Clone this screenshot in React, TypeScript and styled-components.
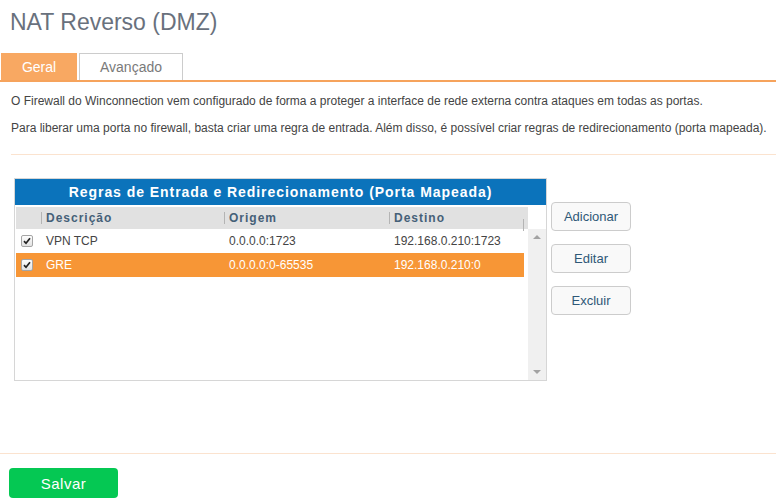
import styled, { createGlobalStyle } from 'styled-components';

const GlobalStyle = createGlobalStyle`
  body {
    margin: 0;
    background: #fff;
    font-family: "Liberation Sans", Arial, sans-serif;
  }
`;

type Rule = {
  desc: string;
  origem: string;
  destino: string;
  checked: boolean;
  selected?: boolean;
};

const rules: Rule[] = [
  { desc: 'VPN TCP', origem: '0.0.0.0:1723', destino: '192.168.0.210:1723', checked: true },
  { desc: 'GRE', origem: '0.0.0.0:0-65535', destino: '192.168.0.210:0', checked: true, selected: true },
];

function Check() {
  return (
    <CheckBox>
      <svg width='8' height='8' viewBox='0 0 8 8'>
        <path d='M1 4.2 L3 6.3 L7 1.2' fill='none' stroke='#222' strokeWidth='1.7' />
      </svg>
    </CheckBox>
  );
}

function App() {
  return (
    <Page>
      <GlobalStyle />
      <Title>NAT Reverso (DMZ)</Title>

      <TabBar>
        <Tab $active $width={76}>Geral</Tab>
        <Tab $width={104}>Avançado</Tab>
      </TabBar>

      <Content>
        <Text>
          O Firewall do Winconnection vem configurado de forma a proteger a interface de rede externa contra
          ataques em todas as portas.
        </Text>
        <Text>
          Para liberar uma porta no firewall, basta criar uma regra de entrada. Além disso, é possível criar regras
          de redirecionamento (porta mapeada).
        </Text>
        <Divider />

        <RulesArea>
          <Grid>
            <Caption>Regras de Entrada e Redirecionamento (Porta Mapeada)</Caption>
            <GridBody>
              <List>
                <HeadRow>
                  <span />
                  <HeadCell>Descrição</HeadCell>
                  <HeadCell>Origem</HeadCell>
                  <HeadCell>Destino</HeadCell>
                  <HeadCell />
                </HeadRow>
                {rules.map((r) => (
                  <Row key={r.desc} $selected={r.selected}>
                    <CheckCell>{r.checked && <Check />}</CheckCell>
                    <Cell>{r.desc}</Cell>
                    <Cell>{r.origem}</Cell>
                    <Cell>{r.destino}</Cell>
                  </Row>
                ))}
              </List>
              <ScrollBar>
                <ScrollTop />
                <Track>
                  <Arrow $up />
                  <Arrow />
                </Track>
              </ScrollBar>
            </GridBody>
          </Grid>

          <Actions>
            <ActionButton>Adicionar</ActionButton>
            <ActionButton>Editar</ActionButton>
            <ActionButton>Excluir</ActionButton>
          </Actions>
        </RulesArea>
      </Content>

      <Footer>
        <SaveButton>Salvar</SaveButton>
      </Footer>
    </Page>
  );
}

const Page = styled.div`
  width: 776px;
  height: 502px;
  overflow: hidden;
`;

const Title = styled.h1`
  margin: 0;
  box-sizing: border-box;
  height: 53px;
  padding: 11px 0 0 10px;
  font-size: 23px;
  line-height: 23px;
  font-weight: normal;
  color: #69717d;
`;

const TabBar = styled.div`
  display: flex;
  gap: 2px;
  padding-left: 1px;
  height: 29px;
  box-sizing: border-box;
  border-bottom: 2px solid #f6a35c;
`;

const Tab = styled.div<{ $active?: boolean; $width: number }>`
  width: ${(p) => p.$width}px;
  height: 27px;
  box-sizing: border-box;
  display: flex;
  align-items: center;
  justify-content: center;
  font-size: 14px;
  background: ${(p) => (p.$active ? '#f8a862' : '#fff')};
  color: ${(p) => (p.$active ? '#fff' : '#7a7a7a')};
  border: 1px solid ${(p) => (p.$active ? '#f8a862' : '#cccccc')};
  border-bottom: none;
  cursor: pointer;
`;

const Content = styled.div`
  padding: 6px 0 0 11px;
`;

const Text = styled.p`
  margin: 0;
  font-size: 12px;
  line-height: 27px;
  color: #444;
`;

const Divider = styled.div`
  margin-top: 12px;
  height: 1px;
  background: #fbe3cf;
`;

const RulesArea = styled.div`
  display: flex;
  align-items: flex-start;
  gap: 4px;
  margin: 23px 0 0 3px;
`;

const Grid = styled.div`
  width: 533px;
  height: 203px;
  box-sizing: border-box;
  border: 1px solid #d6d6d6;
  display: flex;
  flex-direction: column;
`;

const Caption = styled.div`
  height: 26px;
  background: #0b73bb;
  color: #fff;
  font-size: 14px;
  font-weight: bold;
  letter-spacing: 0.95px;
  display: flex;
  align-items: center;
  justify-content: center;
`;

const GridBody = styled.div`
  flex: 1;
  display: flex;
  padding-top: 2px;
`;

const List = styled.div`
  width: 513px;
  padding-left: 1px;
`;

const columns = '25px 183px 165px 134px 1fr';

const HeadRow = styled.div`
  display: grid;
  grid-template-columns: ${columns};
  height: 22px;
  align-items: center;
  background: #e1e1e1;
`;

const HeadCell = styled.div`
  position: relative;
  padding-left: 5px;
  font-size: 12px;
  font-weight: bold;
  letter-spacing: 1px;
  color: #456078;

  &::before {
    content: '';
    position: absolute;
    left: 0;
    top: 1px;
    width: 1px;
    height: 12px;
    background: #b4b4b4;
  }
`;

const Row = styled.div<{ $selected?: boolean }>`
  display: grid;
  grid-template-columns: ${columns};
  height: 24px;
  align-items: center;
  margin-right: 4px;
  background: ${(p) => (p.$selected ? '#f79636' : '#fff')};
  color: ${(p) => (p.$selected ? '#fff' : '#444')};
`;

const CheckCell = styled.div`
  padding-left: 5px;
  display: flex;
`;

const CheckBox = styled.span`
  width: 12px;
  height: 12px;
  box-sizing: border-box;
  border: 1px solid #a5a5a5;
  border-radius: 2px;
  background: linear-gradient(#fdfdfd, #e2e2e2);
  display: flex;
  align-items: center;
  justify-content: center;
`;

const Cell = styled.div`
  padding-left: 5px;
  font-size: 12px;
`;

const ScrollBar = styled.div`
  width: 18px;
  display: flex;
  flex-direction: column;
`;

const ScrollTop = styled.div`
  height: 22px;
  background: #fff;
`;

const Track = styled.div`
  flex: 1;
  background: #f0f0f0;
  display: flex;
  flex-direction: column;
  justify-content: space-between;
  align-items: center;
  padding: 6px 0 6px;
`;

const Arrow = styled.span<{ $up?: boolean }>`
  width: 0;
  height: 0;
  border-left: 4px solid transparent;
  border-right: 4px solid transparent;
  ${(p) => (p.$up ? 'border-bottom: 4px solid #a3a3a3;' : 'border-top: 4px solid #a3a3a3;')}
`;

const Actions = styled.div`
  display: flex;
  flex-direction: column;
  gap: 13px;
  padding-top: 24px;
`;

const ActionButton = styled.button`
  width: 80px;
  height: 29px;
  border: 1px solid #cccccc;
  border-radius: 4px;
  background: #f9f9f9;
  color: #2f5877;
  font-family: "Liberation Sans", Arial, sans-serif;
  font-size: 13px;
  cursor: pointer;
`;

const Footer = styled.div`
  margin-top: 72px;
  border-top: 1px solid #fbe3cf;
  padding: 14px 0 0 9px;
`;

const SaveButton = styled.button`
  width: 109px;
  height: 30px;
  border: none;
  border-radius: 4px;
  background: #05c853;
  color: #fff;
  font-family: "Liberation Sans", Arial, sans-serif;
  font-size: 15px;
  letter-spacing: 0.5px;
  cursor: pointer;
`;

export default App;
